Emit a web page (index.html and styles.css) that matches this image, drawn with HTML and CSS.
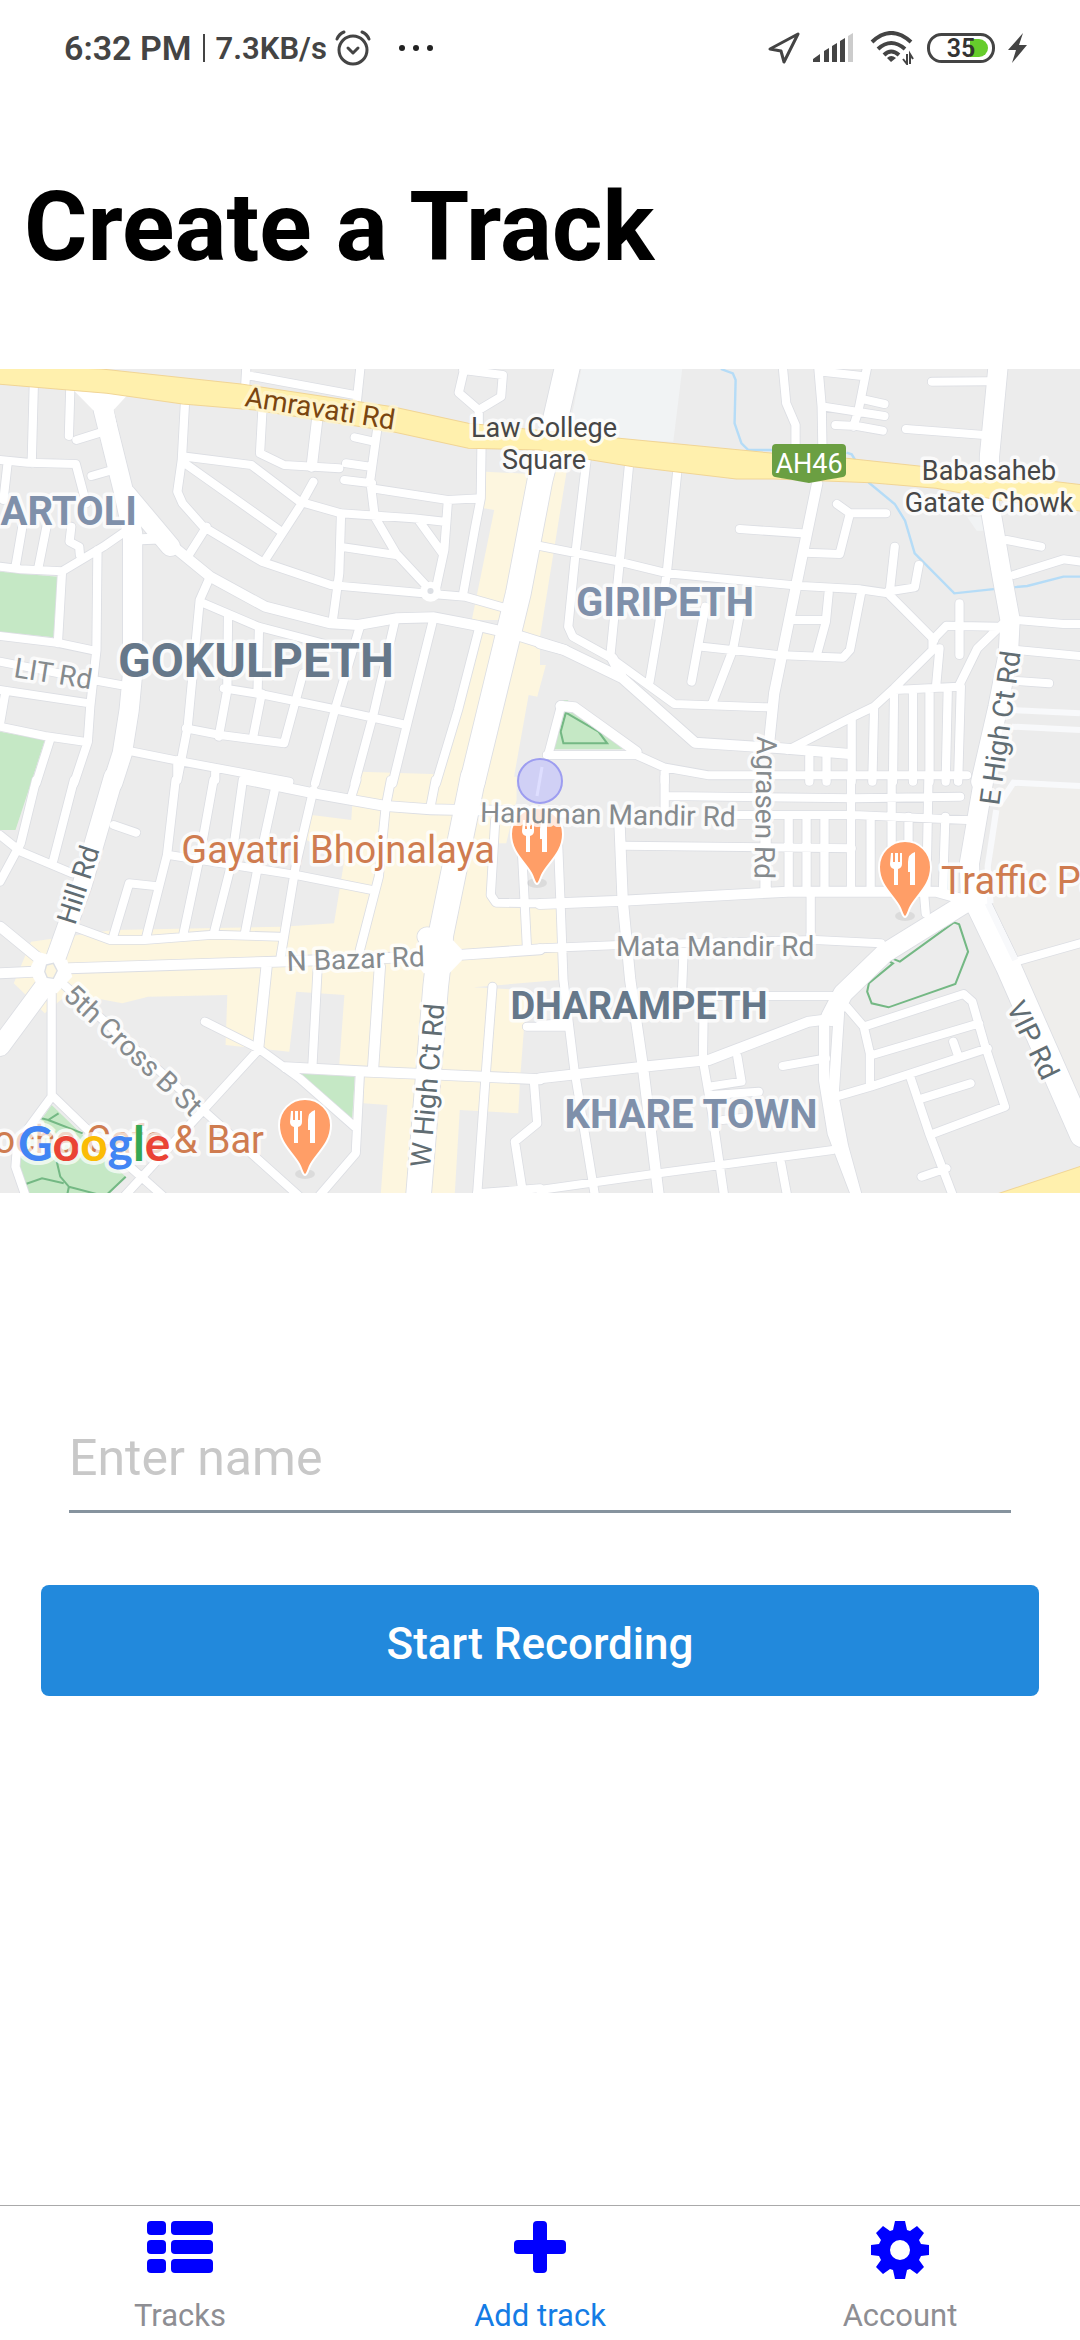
FILE: index.html
```html
<!DOCTYPE html>
<html lang="en">
<head>
<meta charset="utf-8">
<meta name="viewport" content="width=device-width, initial-scale=1">
<title>Create a Track</title>
<link rel="stylesheet" href="styles.css">
</head>
<body>
<header class="status">
  <div class="status-group">
    <span class="clock">6:32 PM</span>
    <span class="divider"></span>
    <span class="speed">7.3KB/s</span>
    <svg class="alarm" width="36" height="36" viewBox="0 0 36 36" fill="none" stroke="#444" stroke-width="3" stroke-linecap="round" stroke-linejoin="round"><circle cx="18" cy="20" r="14"/><path d="M2 9Q4 4 9 2M34 9Q32 4 27 2M13 18l5 5 5-5"/></svg>
    <svg class="dots" width="36" height="8" viewBox="0 0 36 8" fill="#222"><circle cx="4" cy="4" r="3"/><circle cx="18" cy="4" r="3"/><circle cx="32" cy="4" r="3"/></svg>
  </div>
  <div class="status-group status-icons">
    <svg width="32" height="32" viewBox="0 0 32 32" fill="none" stroke="#444" stroke-width="3" stroke-linejoin="round"><path d="M2 17 30 2 16 30 13 19Z"/></svg>
    <svg class="signal" width="41" height="30" viewBox="0 0 41 30" fill="#444"><path d="M0 29v-3l7-5v8zM11 18l5-3v14h-5zM19 13l5-3v19h-5zM27 8l5-3v24h-5z"/><path fill="#ccc" d="M35 3l5-3v29h-5z"/></svg>
    <svg class="wifi" width="44" height="34" viewBox="0 0 44 34" fill="none" stroke="#444" stroke-width="4"><path d="M2 11Q21-7 41 11M8 18Q21 6 35 18M14 24Q21 17 29 24"/><path fill="#444" stroke="none" d="M17 27q4-4 9 0l-5 4z"/><path stroke-width="2" d="M37 23v10l-4-5M40 33V23l3 5"/></svg>
    <svg class="battery" width="68" height="31" viewBox="0 0 68 31"><rect x="1.500" y="1.500" width="65" height="27" rx="13" fill="none" stroke="#444" stroke-width="3"/><path d="M43 6h9a9 9 0 0 1 0 18h-9z" fill="#66cc2c"/><text x="34" y="24">35</text></svg>
    <svg width="20" height="30" viewBox="0 0 20 30" fill="#444"><path d="M15 0 0 17h8L4 30 19 12h-8z"/></svg>
  </div>
</header>

<main>
  <h1>Create a Track</h1>

  <svg class="map" viewBox="0 0 1080 824" role="img" aria-label="Map of Dharampeth">
    <defs>
      <g id="streets">
        <g transform="translate(0 -9) scale(.34439 .33333)">
          <path class="s" d="M98 80 92 310M204 90 200 228M222 240 300 215M0 300 80 308 220 312 250 430M207 500 202 545 230 560 232 585M22 310 10 420M65 500 45 620M135 500 112 620M0 620 60 628 180 634 300 560 370 510M266 348 320 332M180 635 168 850M0 828 165 848 275 872M283 570 280 870 262 1040 255 1145 215 1270M0 905 270 960 350 975M0 990 260 1030M15 1000 0 1090M0 1100 130 1128 250 1146M145 1140 105 1270"/>
          <path class="s" d="M600 500 545 590M537 130 528 300 515 395 530 430 590 500 760 605 960 675 1230 700 1350 710 1460 742M540 290 730 315 870 425 990 460 1200 475 1290 485M530 305 810 510M910 365 870 440 770 600M715 27 712 80M715 45 1030 105M1046 27 1036 125M762 150 755 280 825 315 985 325M1030 232 1085 245M1095 210 1075 360 1088 470 1150 580 1240 680M1005 310 1075 320M1000 360 1080 370M1080 385 1300 420 1395 415M1398 265 1396 415 1380 500 1345 700M1300 430 1290 570 1265 690M1215 480 1285 580M990 470 985 640 965 790M1000 562 1150 585M1350 32 1345 40 1332 98 1390 150 1455 110 1460 45 1345 30M1390 150 1390 200"/>
          <path class="s" d="M610 650 580 720 545 1100 515 1260M580 725 750 800 1010 870M662 770 660 990 635 1130M752 800 748 990M650 985 770 1005 960 1045 1180 1095M760 1000 735 1130M540 1105 640 1125 825 1150 880 940M1045 800 975 1040 915 1270M1145 790 1085 1060 1030 1270M1255 790 1185 1080 1140 1270M1390 810 1330 1050 1266 1270M385 1175 530 1205 840 1265M515 1200V1260M625 1230V1260"/>
          <path class="m" d="M480 540 610 650 770 740 960 790 1040 795 1150 775 1260 772 1390 798 1460 815M410 538 480 535M922 170 905 320M1500 825 1640 870"/>
          <path class="l" d="M310 110 300 150 360 400 385 520V940L375 1050 355 1180 327 1270M365 400 495 560"/>
          <path class="xl" d="M1650 10 1610 190 1568 360 1505 700 1372 1265"/>
        </g>
        <g transform="translate(540 -9) scale(.34439 .33333)">
          <path class="s" d="M705 20 715 130 742 195V260M808 20 818 140 820 260M820 35 935 48M950 20 925 150 910 200M940 118 1000 132M825 140 1000 168M858 195 920 198 995 212M1138 65 1300 64M1063 207 1290 225M1355 540 1455 560M1375 645 1520 598 1570 605M580 507 760 520M862 432 900 460H1005M900 460 870 582 770 578M1030 560 1015 700M1100 615 1088 682 1010 695M0 558 230 605 370 640 760 678 930 688 1010 700 1145 840M135 300 103 580 82 800 95 830 200 890 390 1032 660 1042M258 320 230 620 205 880M398 340 368 640 345 800 318 965M480 740 440 965M582 750 560 870 500 1030M470 860 690 885 880 893 900 870 932 700M838 700 830 785 805 880M735 780H830"/>
          <path class="s" d="M20 1185H280L360 1222 490 1246H1240M62 1035 25 1180M720 1170 900 1075 970 1040 1028 985 1140 870V840L1180 797 1330 800M1345 790 1270 865 1215 980 1030 990M1218 730V885M1160 865 1150 980M1385 780 1520 792H1570M1385 870 1568 888M1385 963 1478 970M905 1080V1265M970 1045 965 1265M1028 990 1025 1265M1083 990V1265M1131 990V1265M1184 990 1178 1265M1222 980 1214 1265M782 1190V1265M832 1190V1265M362 1225V1265"/>
          <path class="m" d="M0 850 70 870 240 955 450 1148 700 1165 900 1182M235 945 210 895M805 370 755 620 680 1000 665 1150M60 1038 100 1042 280 1175"/>
          <path class="l" d="M1330 20 1305 290V430L1340 640 1365 780 1360 880 1330 1040 1280 1265"/>
        </g>
        <g transform="translate(0 411) scale(.34439 .33333)">
          <path class="s" d="M105 0 60 190 0 305M215 0 155 240M0 165 60 215 210 280M330 135 395 158M215 440 320 480H420L620 464 810 470M510 0 485 225 425 470M490 225 860 285 1080 330M450 318 375 310 330 465M620 0 580 230 533 460M705 0 670 260 622 455M800 20 745 280 712 455M910 30 860 250 815 530M1035 0 1020 50M1135 0 1120 80 1100 290 1045 510M1265 0 1250 80M595 725 750 805 870 895 1035 1045M150 620V950L50 1090 45 1160 75 1250M150 945 250 1045 410 1190 475 1250M750 810 360 1250M170 600 600 1000 870 1250M1045 880 1033 1120 925 1250M1430 620 1410 890 1385 1250M1438 120 1425 345 1440 368 1568 370M1515 200 1530 500M1550 900 1560 1030 1495 1085 1520 1250M1530 740H1650M1385 1240 1568 1225M922 570 907 860"/>
          <path class="m" d="M200 565 800 545 1230 530M1330 525 1568 508M720 0 900 38 1120 78 1250 88 1568 95 1640 98M775 550 750 800M1103 560 1083 870M830 862 1070 875 1230 882 1568 898M0 440 130 550"/>
          <path class="l" d="M330-10 240 310 160 540M150 590 0 800M1240 470 1280 490"/>
          <path class="m" d="M0 580 100 575"/>
          <path class="xl" d="M1374-10 1280 465 1275 530 1265 620 1215 1250"/>
        </g>
        <g transform="translate(540 411) scale(.34439 .33333)">
          <path class="s" d="M370 48 910 55 1220 50M560 105 910 105 1240 120M362-10V100M903-10V330M1021-10V330M1128-10 1122 330M722 110V330M774 110V330M826 110V330M960 110V330M1070 110V330M1177 110 1170 330M245 197 905 205M52 180 60 380 68 600 100 870 160 1250M0 505 230 495 800 480 990 490M786 340V480M417 510 412 640M0 735 80 728M510 648H870M475 700 473 840 500 1000 535 1250M573 830 585 905 490 920M500 945 635 935M705 858 830 835M530 1020 620 1010M0 1230 345 1180 850 1110M700 1150 718 1250M890 680 940 740 958 820V910M940 740 1230 642 1255 665 1290 790 1350 980 1145 1060M965 825 1275 730M860 950 960 920 1300 805M1200 785 1215 830M1075 890 1130 1060 1200 1250M1110 955 1250 910M1108 1190 1180 1165M1115 340 1120 400M1380 545 1568 490"/>
          <path class="m" d="M230 110 240 360 262 600 300 870 345 1250M0 372 240 362 720 335H1150L1235 360M655-10V330M0 895 300 860 490 840 780 725 860 715M825 740V900L850 1060 920 1250M868 700 852 950 880 1100 920 1250"/>
          <path class="l" d="M1250 360 1000 520 880 640 845 710M1290-10 1247 250 1250 370"/>
          <path class="xl" d="M1262 350 1360 560 1575 1065"/>
        </g>
      </g>
      <g id="pin">
        <ellipse cx="0" cy="49" rx="10" ry="5" fill="#000" opacity=".07"/>
        <path d="M0 50C-3 49-3 44-6 39C-13 27-26 18-26 0A26 26 0 0 1 26 0C26 18 13 27 6 39C3 44 3 49 0 50Z" fill="#ff9e67" stroke="#fff" stroke-width="2"/>
        <path fill="#fff" d="M-14-14h2v9h2v-9h3v9h2v-9h2v11q0 4-4 5v16h-4V2q-4-1-4-5zM10-15v33H5V5H3V-5q0-8 7-10z"/>
      </g>
    </defs>

    <rect width="1080" height="824" fill="#ececec"/>
    <g transform="translate(0 -9) scale(.34439 .33333)">
      <path class="business" d="M1410 335 1600 345 1568 560 1500 780H1370L1435 450 1405 445ZM1646 330 1568 830V915H1585L1560 1010 1535 1005 1490 1265H1280L1390 810H1460L1530 345Z"/>
      <path class="park" d="M0 635 167 650 155 832 0 815ZM0 1115 130 1140 92 1262 45 1410H0Z"/>
    </g>
    <g transform="translate(540 -9) scale(.34439 .33333)">
      <path fill="#f1f3f4" d="M120 27H413L387 245 80 230ZM1240 470H1300V512H1268Z"/>
      <path class="park" d="M65 1020H80L240 1168H38Z"/>
      <path class="trail" d="M75 1058 170 1115 195 1150H68L60 1115Z"/>
      <path class="water" d="M525 27 560 40 568 60 565 190 585 250 605 270H680M890 278 905 283 955 368 1030 432 1060 482 1088 580 1203 700 1310 688 1415 678 1520 650H1568"/>
      <path class="lane" d="M1370 1050 1568 1060M1370 1100 1568 1110"/>
    </g>
    <g transform="translate(0 411) scale(.34439 .33333)">
      <path class="business" d="M1045-25 1500-10V60L1470 190H1440L1430 370 1618 385 1622 600 1375 622 1530 630 1510 900 1505 1000 1335 990 1320 1250H1105L1125 975 1055 970 1060 870 985 855 1000 645 860 635 840 815 655 795 660 645 430 650 355 670 200 640 130 700 40 610 90 485 330 450 820 440 970 430 1000 240 890 180 905 105 1020 120 1025 40Z"/>
      <path class="park" d="M860 880 1030 890 1022 1025ZM150 975 365 1190 310 1250H85L58 1160 65 1100Z"/>
      <path class="trail" d="M120 1015 140 1020 170 1000M140 1020 240 1060M165 1145 175 1190 200 1220 195 1245M75 1212 122 1195 185 1210M200 1220 280 1242M312 1242 365 1190"/>
    </g>
    <g transform="translate(540 411) scale(.34439 .33333)">
      <path fill="#efeeec" d="M1350 20H1568V960L1300 370 1330 80Z"/>
      <path class="trail" d="M1022 535 1045 545 1202 427 1217 433 1243 515 1206 612 1012 682 963 670 950 635 955 610 1025 550 1012 543"/>
    </g>

    <use href="#streets" class="casing"/>
    <use href="#streets" class="surface"/>

    <g transform="translate(0 -9) scale(.34439 .33333)" fill="#fff">
      <path d="M215 92 370 105 330 150 340 200 270 150Z"/>
      <circle cx="1250" cy="695" r="30"/>
      <circle cx="1250" cy="693" r="9" fill="#dcdfe4"/>
      <path class="highway" d="M-10 15 295 27 700 72 1140 140 1360 190 1798 235 2248 280 2458 295 2668 318 3150 375V455L2898 420 2718 385 2528 368 2248 357H2138L1838 320 1718 300 1568 270 1360 265 1140 215 740 150 530 132 310 100-10 72Z"/>
    </g>
    <g transform="translate(0 411) scale(.34439 .33333)" fill="#fff">
      <path d="M1240 465 1310 475 1342 510V540L1305 580H1230L1205 545 1215 490Z"/>
      <path d="M110 515 195 540 210 590 165 640 110 620 85 570Z"/>
      <path d="M135 555 155 550 166 572 155 595 137 592 130 575Z" fill="#fdf6df" stroke="#dcdfe4" stroke-width="4"/>
    </g>
    <g transform="translate(540 411) scale(.34439 .33333)">
      <path class="lane" d="M1325 90 1300 260 1308 370M1335 70 1375 8 1568 18M1300 370 1380 540"/>
      <path class="highway" d="M1330 1241 1575 1157V1250H1300Z"/>
    </g>
    <path d="M776 75H842Q846 75 846 79V104Q846 107 843 108Q830 110 809 114Q788 110 775 108Q772 107 772 104V79Q772 75 776 75Z" fill="#6b9f42"/>

    <use href="#pin" x="537" y="465"/>
    <use href="#pin" x="905" y="498"/>
    <use href="#pin" x="305" y="756"/>

    <g class="labels">
      <text class="road highway-name" transform="translate(244 37) rotate(9)">Amravati Rd</text>
      <text class="place" x="544" y="68">Law College</text>
      <text class="place" x="544" y="100">Square</text>
      <text class="place" x="989" y="111">Babasaheb</text>
      <text class="place" x="989" y="143">Gatate Chowk</text>
      <text class="shield" x="809" y="104">AH46</text>
      <text class="area end" x="137" y="156">ARTOLI</text>
      <text class="area" x="665" y="247">GIRIPETH</text>
      <text class="area" x="691" y="759">KHARE TOWN</text>
      <text class="area city" x="256" y="308">GOKULPETH</text>
      <text class="area town" x="639" y="650">DHARAMPETH</text>
      <text class="road" transform="translate(13 308) rotate(9)">LIT Rd</text>
      <text class="road" transform="translate(480 453) rotate(1)">Hanuman Mandir Rd</text>
      <text class="road" transform="translate(287 602) rotate(-2)">N Bazar Rd</text>
      <text class="road" x="616" y="587">Mata Mandir Rd</text>
      <text class="road" transform="translate(62 628) rotate(43)">5th Cross B St</text>
      <text class="road" transform="translate(757 367) rotate(91)">Agrasen Rd</text>
      <text class="road main" transform="translate(75 557) rotate(-72)">Hill Rd</text>
      <text class="road main" transform="translate(430 799) rotate(-85)">W High Ct Rd</text>
      <text class="road main" transform="translate(999 437) rotate(-82)">E High Ct Rd</text>
      <text class="road main" transform="translate(1006 638) rotate(64)">VIP Rd</text>
      <text class="food end" x="495" y="494">Gayatri Bhojnalaya</text>
      <text class="food" x="941" y="525">Traffic Park</text>
      <text class="food end" x="264" y="784">Mocha Cafe &amp; Bar</text>
    </g>
    <circle cx="540" cy="412" r="22" fill="#c4c4fa" fill-opacity=".7" stroke="#9d9df0" stroke-width="2"/>
    <path d="M537 427 542 398" stroke="#dedeff" stroke-width="3"/>
    <text class="google" x="18" y="792"><tspan fill="#4285f4">G</tspan><tspan fill="#ea4335">o</tspan><tspan fill="#fbbc05">o</tspan><tspan fill="#4285f4">g</tspan><tspan fill="#34a853">l</tspan><tspan fill="#ea4335">e</tspan></text>
  </svg>

  <form class="track-form">
    <input class="name" type="text" placeholder="Enter name" aria-label="Enter name">
    <button class="record" type="button">Start Recording</button>
  </form>
</main>

<nav class="tabs">
  <a href="#tracks">
    <svg width="66" height="58" viewBox="0 0 66 58" fill="#00f"><rect width="19" height="14" rx="4"/><rect x="24" width="42" height="14" rx="4"/><rect y="19" width="19" height="14" rx="4"/><rect x="24" y="19" width="42" height="14" rx="4"/><rect y="38" width="19" height="14" rx="4"/><rect x="24" y="38" width="42" height="14" rx="4"/></svg>
    Tracks
  </a>
  <a href="#add" class="active" aria-current="page">
    <svg width="52" height="58" viewBox="0 0 52 58" fill="#00f"><rect x="19" width="14" height="52" rx="4"/><rect y="19" width="52" height="14" rx="4"/></svg>
    Add track
  </a>
  <a href="#account">
    <svg width="58" height="58" viewBox="0 0 58 58" fill="#00f"><path fill-rule="evenodd" d="M24 0H34L36 9L39 10L46 5L53 12L48 19L50 23L58 24V34L50 35L48 39L53 46L46 53L39 48L36 49L34 58H24L22 49L19 48L12 53L5 46L10 39L8 35L0 34V24L8 23L10 19L5 12L12 5L19 10L22 9ZM29 19A10 10 0 1 0 29 39A10 10 0 1 0 29 19Z"/></svg>
    Account
  </a>
</nav>
</body>
</html>
```
FILE: styles.css
```css
* { box-sizing: border-box; }

body {
  margin: 0;
  min-height: 100vh;
  display: flex;
  flex-direction: column;
  background: #fff;
  font-family: Roboto, "Liberation Sans", sans-serif;
}

.status {
  display: flex;
  justify-content: space-between;
  height: 96px;
  padding: 0 52px 0 64px;
  color: #444;
  font-weight: 600;
}
.status-group { display: flex; align-items: center; }
.clock { font-size: 34px; }
.divider { width: 2px; height: 28px; margin: 0 11px; background: #444; }
.speed { font-size: 31px; }
.alarm { margin-left: 8px; }
.dots { margin-left: 27px; }
.status-icons { gap: 13px; }
.signal { margin-right: 3px; }
.battery text { font-size: 25px; fill: #333; text-anchor: middle; }

h1 {
  margin: 75px 0 85px;
  padding: 0 24px;
  color: #000;
  font-size: 97px;
  font-weight: 700;
  line-height: 113px;
}

/* Map */
.map { display: block; width: 100%; height: auto; overflow: hidden; }
.business { fill: #fdf6df; }
.park { fill: #c5e8c5; }
.trail { fill: none; stroke: #74b884; stroke-width: 6; }
.water { fill: none; stroke: #b5dcf7; stroke-width: 7; }
.lane { fill: none; stroke: #f8f9fb; stroke-width: 18; }
.highway { fill: #fff0ad; stroke: #f1d595; stroke-width: 3; }
.casing, .surface {
  fill: none;
  stroke-linecap: round;
  stroke-linejoin: round;
}
.casing { stroke: #dcdee3; --edge: 5px; }
.surface { stroke: #fff; --edge: 0px; }
.s { stroke-width: calc(24px + var(--edge)); }
.m { stroke-width: calc(30px + var(--edge)); }
.l { stroke-width: calc(56px + var(--edge)); }
.xl { stroke-width: calc(72px + var(--edge)); }

.labels text {
  paint-order: stroke;
  stroke: #fff;
  stroke-opacity: .8;
  stroke-width: 7px;
  stroke-linejoin: round;
}
.road { font-size: 28px; fill: #868b8e; }
.road.main { fill: #616d73; }
.road.highway-name { fill: #7a4510; stroke: #fff6d2; }
.place { font-size: 27px; fill: #474747; text-anchor: middle; }
.area { font-size: 40px; font-weight: 700; fill: #7f90aa; text-anchor: middle; }
.area.city { font-size: 48px; fill: #66788a; }
.area.town { font-size: 38px; fill: #66788a; }
.food { font-size: 38px; fill: #cf7c50; }
.labels .end { text-anchor: end; }
.labels .shield { font-size: 27px; fill: #fff; stroke: none; text-anchor: middle; }
.google {
  font-family: Lato, Roboto, sans-serif;
  font-size: 48px;
  font-weight: 700;
  paint-order: stroke;
  stroke: #fff;
  stroke-opacity: .7;
  stroke-width: 8px;
}

/* Form */
.track-form {
  display: flex;
  flex-direction: column;
  gap: 72px;
  padding: 212px 41px 0;
}
.name {
  height: 108px;
  margin: 0 28px;
  padding: 0;
  border: 0;
  border-bottom: 3px solid #86939e;
  border-radius: 0;
  background: none;
  font: 400 50px Roboto, sans-serif;
  outline: 0;
}
.name::placeholder { color: #c8c8c8; opacity: 1; }
.record {
  height: 111px;
  padding: 6px 0 0;
  border: 0;
  border-radius: 8px;
  background: #2289dc;
  color: #fff;
  font: 500 44px Roboto, sans-serif;
}

/* Tab bar */
.tabs {
  display: grid;
  grid-template-columns: repeat(3, 1fr);
  height: 135px;
  margin-top: auto;
  border-top: 1px solid #a9a9aa;
}
.tabs a {
  display: flex;
  flex-direction: column;
  align-items: center;
  gap: 18px;
  padding-top: 15px;
  color: #8e8e93;
  font-size: 31px;
  line-height: 38px;
  text-decoration: none;
}
.tabs .active { color: #147ce5; }
```
